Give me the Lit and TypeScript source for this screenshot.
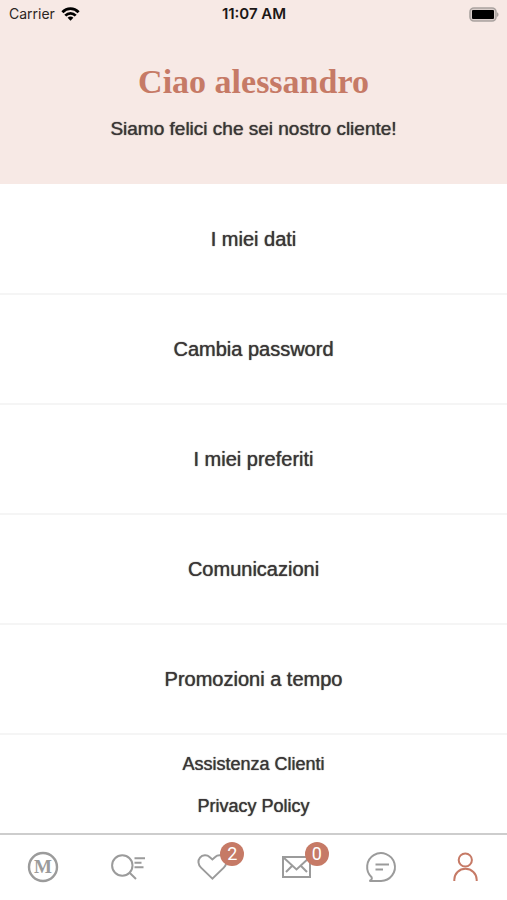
import { LitElement, html, css, svg, nothing } from "lit";
import { customElement } from "lit/decorators.js";
import { classMap } from "lit/directives/class-map.js";

const sections = ["I miei dati", "Cambia password", "I miei preferiti", "Comunicazioni", "Promozioni a tempo"];
const footerLinks = ["Assistenza Clienti", "Privacy Policy"];

const tabs = [
  {
    label: "Home",
    icon: svg`<circle cx="19" cy="18" r="14" stroke-width="2.4"/><text class="letter" x="19" y="24" text-anchor="middle">M</text>`,
  },
  {
    label: "Cerca",
    icon: svg`<circle cx="13.3" cy="16.5" r="10.2"/><path d="M20.6 23.8L27 30M25.5 9.3H36M25.5 13.8H32.5M25.5 18.2H34.5"/>`,
  },
  {
    label: "Preferiti",
    badge: 2,
    icon: svg`<path d="M19.4 29.6L8 18.6C5 15.6 4.6 11.4 7 8.6C9.4 5.8 14 5.6 16.6 8L19.4 10.4L22.2 8C24.8 5.6 29.4 5.8 31.8 8.6C34.2 11.4 33.8 15.6 30.8 18.6Z"/>`,
  },
  {
    label: "Messaggi",
    badge: 0,
    icon: svg`<path d="M5 8H32V28H5ZM5 8L18.5 20.5L32 8M8 23L14.2 16.8M29 23L22.8 16.8"/>`,
  },
  {
    label: "Chat",
    icon: svg`<path d="M9.6 28.2A13.9 13.9 0 1 1 19 31.9H7.4C9.2 31.2 10.4 30 9.6 28.2ZM13.5 15.6H27M13.5 20.4H21"/>`,
  },
  {
    label: "Profilo",
    active: true,
    icon: svg`<circle cx="18.3" cy="11" r="6.6"/><path d="M7.3 32V30.8C7.3 24.6 12.2 19.8 18.4 19.8S29.7 24.6 29.7 30.8V32"/>`,
  },
];

@customElement("status-bar")
export class StatusBar extends LitElement {
  static styles = css`
    :host {
      display: grid;
      grid-template-columns: 1fr auto 1fr;
      align-items: center;
      height: 28px;
      padding: 0 8px 0 9px;
      font: 14px/28px Inter, Roboto, sans-serif;
      color: #2c2523;
    }
    .carrier {
      display: flex;
      align-items: center;
      gap: 6px;
    }
    .time {
      font-size: 15px;
      font-weight: 600;
      color: #1c1716;
    }
    .battery {
      justify-self: end;
    }
    svg {
      display: block;
    }
  `;

  render() {
    return html`
      <span class="carrier">
        Carrier
        <svg width="19" height="14" viewBox="0 0 18 14" fill="none" stroke="#000" stroke-width="2.8" aria-hidden="true">
          <path d="M0.9 5.2C5.4 0.4 12.6 0.4 17.1 5.2M3.8 8.6C6.8 5.5 11.2 5.5 14.2 8.6" />
          <path d="M6.1 10.8C7.8 9.2 10.2 9.2 11.9 10.8L9 13.8Z" fill="#000" stroke="none" />
        </svg>
      </span>
      <span class="time">11:07 AM</span>
      <svg class="battery" width="30" height="15" viewBox="0 0 30 15" aria-hidden="true">
        <rect x="1" y="1" width="26" height="13" rx="4" fill="#d9cecb" stroke="#aaa3a0" stroke-width="1.6" />
        <rect x="3" y="3" width="22" height="9" rx="1" fill="#000" />
        <path d="M28 5.2C30 6 30 9 28 9.8Z" fill="#aaa3a0" />
      </svg>
    `;
  }
}

@customElement("tab-bar")
export class TabBar extends LitElement {
  static styles = css`
    :host {
      display: block;
      border-top: 2px solid #cdcdcd;
      background: #fff;
    }
    nav {
      display: grid;
      grid-template-columns: repeat(6, 1fr);
      padding: 14px 0 15px;
    }
    .tab {
      display: grid;
      place-items: center;
      padding: 0;
      border: 0;
      background: none;
      color: #9b9b9b;
      cursor: pointer;
    }
    .active {
      color: #c67a66;
    }
    .icon {
      position: relative;
      width: 36px;
      height: 36px;
    }
    svg {
      display: block;
      overflow: visible;
      fill: none;
      stroke: currentColor;
      stroke-width: 2;
    }
    .letter {
      font: bold 19px "Liberation Serif", serif;
      fill: currentColor;
      stroke: none;
    }
    .badge {
      position: absolute;
      top: -7px;
      left: 27px;
      width: 24px;
      height: 24px;
      border-radius: 50%;
      background: #c67a66;
      color: #fff;
      font: 18px/24px Roboto, sans-serif;
      text-align: center;
    }
  `;

  render() {
    return html`
      <nav>
        ${tabs.map(
          (tab) => html`
            <button class=${classMap({ tab: true, active: !!tab.active })} aria-label=${tab.label}>
              <span class="icon">
                <svg width="36" height="36" viewBox="0 0 36 36" aria-hidden="true">${tab.icon}</svg>
                ${tab.badge === undefined ? nothing : html`<span class="badge">${tab.badge}</span>`}
              </span>
            </button>
          `
        )}
      </nav>
    `;
  }
}

@customElement("app-root")
export class AppRoot extends LitElement {
  static styles = css`
    :host {
      display: flex;
      flex-direction: column;
      min-height: 100vh;
      background: #fff;
      color: #3a3636;
      font-family: "Liberation Sans", Arial, sans-serif;
      text-align: center;
    }
    header {
      padding-bottom: 43px;
      background: #f7e9e5;
    }
    h1 {
      margin: 34px 0 15px;
      font: bold 34px/40px "Liberation Serif", serif;
      color: #c67a66;
    }
    p {
      margin: 0;
      font-size: 19px;
      line-height: 24px;
    }
    p,
    a {
      text-shadow: 0 0 1px currentColor;
    }
    a {
      display: block;
      color: inherit;
      text-decoration: none;
    }
    main {
      flex: 1;
      padding-top: 1px;
    }
    .section {
      border-bottom: 2px solid #f5f5f5;
      font-size: 20px;
      line-height: 108px;
    }
    .links {
      padding-top: 8px;
    }
    .link {
      font-size: 18px;
      line-height: 42px;
    }
  `;

  render() {
    return html`
      <header>
        <status-bar></status-bar>
        <h1>Ciao alessandro</h1>
        <p>Siamo felici che sei nostro cliente!</p>
      </header>
      <main>
        ${sections.map((label) => html`<a class="section" href="#">${label}</a>`)}
        <div class="links">${footerLinks.map((label) => html`<a class="link" href="#">${label}</a>`)}</div>
      </main>
      <tab-bar></tab-bar>
    `;
  }
}
